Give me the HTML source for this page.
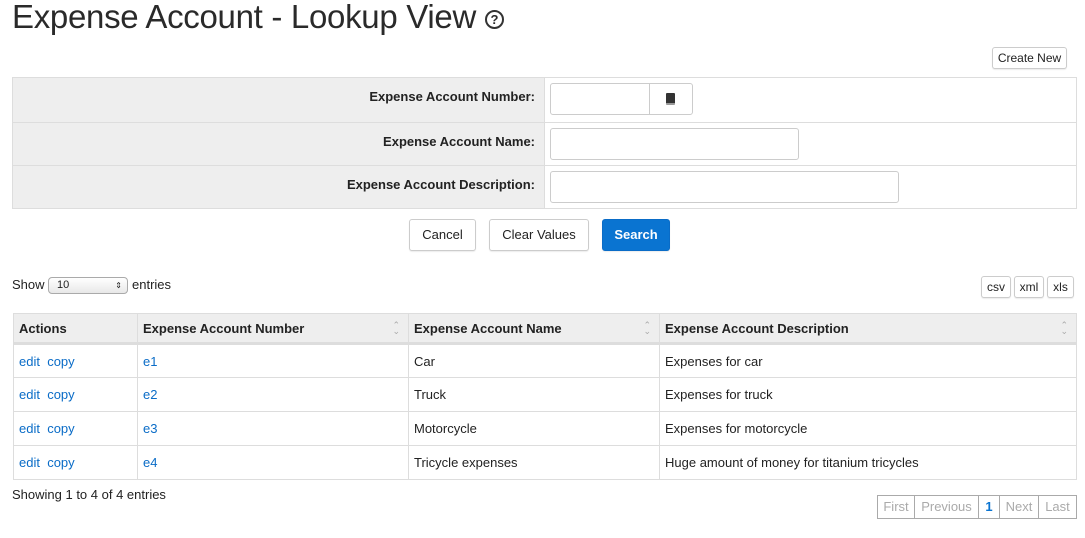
<!DOCTYPE html><html><head><style>
*{box-sizing:border-box}
body{margin:0;width:1085px;height:538px;background:#fff;font-family:"Liberation Sans",sans-serif;font-size:13px;color:#222;position:relative;overflow:hidden}
.a{position:absolute}
h1{position:absolute;left:12px;top:-2px;margin:0;font-weight:normal;font-size:33px;color:#2a2a2a;letter-spacing:-0.3px}
.btn{position:absolute;border:1px solid #ccc;border-radius:3px;background:#fff;text-align:center;font-size:13px;box-shadow:0 1px 1px rgba(0,0,0,.08)}
.inp{position:absolute;border:1px solid #ccc;border-radius:3px;background:#fff}
.lbl{position:absolute;right:550px;font-weight:bold;font-size:13px;width:400px;text-align:right}
table{position:absolute;left:13px;top:313px;border-collapse:collapse;width:1064px}
td,th{border:1px solid #ddd;padding:0 5px;height:34px;text-align:left;font-size:13px}
th{height:30px;background:#eee;border-bottom:3px solid #ddd;position:relative}
a{color:#0a6cc7;text-decoration:none}
.s{position:absolute;right:8px;top:8px;color:#aaa;font-size:9px;line-height:6px;font-weight:normal}
.pg{position:absolute;top:495px;height:24px;border:1px solid #aaa;color:#aaa;text-align:center;line-height:22px;font-size:13px}
</style></head><body>
<h1>Expense Account - Lookup View <span style="display:inline-block;width:19px;height:19px;border:2px solid #333;border-radius:50%;font-size:13px;text-align:center;line-height:15px;vertical-align:4px;font-weight:bold">?</span></h1>
<div class="btn" style="left:992px;top:47px;width:75px;height:22px;line-height:20px;font-size:12px">Create New</div>
<div class="a" style="left:12px;top:77px;width:1065px;height:132px;border:1px solid #ddd;background:#fff"></div>
<div class="a" style="left:13px;top:78px;width:531px;height:130px;background:#eee"></div>
<div class="a" style="left:13px;top:122px;width:1063px;height:1px;background:#ddd"></div>
<div class="a" style="left:13px;top:165px;width:1063px;height:1px;background:#ddd"></div>
<div class="a" style="left:544px;top:78px;width:1px;height:130px;background:#ddd"></div>
<div class="lbl" style="left:135px;top:89px">Expense Account Number:</div>
<div class="lbl" style="left:135px;top:134px">Expense Account Name:</div>
<div class="lbl" style="left:135px;top:177px">Expense Account Description:</div>
<div class="inp" style="left:550px;top:83px;width:143px;height:32px"></div>
<div class="a" style="left:649px;top:84px;width:1px;height:30px;background:#ccc"></div>
<div class="a" style="left:666px;top:93px;width:9px;height:12px;background:#333;border-radius:1px;border-bottom:2px solid #999"></div>
<div class="inp" style="left:550px;top:128px;width:249px;height:32px"></div>
<div class="inp" style="left:550px;top:171px;width:349px;height:32px"></div>
<div class="btn" style="left:409px;top:219px;width:67px;height:32px;line-height:30px">Cancel</div>
<div class="btn" style="left:489px;top:219px;width:100px;height:32px;line-height:30px">Clear Values</div>
<div class="btn" style="left:602px;top:219px;width:68px;height:32px;line-height:30px;background:#0a74d1;border-color:#0a6cc7;color:#fff;font-weight:bold">Search</div>
<div class="a" style="left:12px;top:277px">Show</div>
<div class="a" style="left:48px;top:277px;width:80px;height:17px;border:1px solid #aaa;border-radius:4px;background:linear-gradient(#fff,#e8e8e8);font-size:11px;padding-left:8px;line-height:15px">10<span style="position:absolute;right:5px;font-size:8px">&#8661;</span></div>
<div class="a" style="left:132px;top:277px">entries</div>
<div class="btn" style="left:981px;top:276px;width:30px;height:22px;line-height:20px;font-size:12px">csv</div>
<div class="btn" style="left:1014px;top:276px;width:30px;height:22px;line-height:20px;font-size:12px">xml</div>
<div class="btn" style="left:1047px;top:276px;width:27px;height:22px;line-height:20px;font-size:12px">xls</div>
<table>
<tr><th style="width:124px">Actions</th><th style="width:271px">Expense Account Number<span class="s">&#8963;<br>&#8964;</span></th><th style="width:251px">Expense Account Name<span class="s">&#8963;<br>&#8964;</span></th><th>Expense Account Description<span class="s">&#8963;<br>&#8964;</span></th></tr>
<tr><td><a>edit</a> &nbsp;<a>copy</a></td><td><a>e1</a></td><td>Car</td><td>Expenses for car</td></tr>
<tr><td><a>edit</a> &nbsp;<a>copy</a></td><td><a>e2</a></td><td>Truck</td><td>Expenses for truck</td></tr>
<tr><td><a>edit</a> &nbsp;<a>copy</a></td><td><a>e3</a></td><td>Motorcycle</td><td>Expenses for motorcycle</td></tr>
<tr><td><a>edit</a> &nbsp;<a>copy</a></td><td><a>e4</a></td><td>Tricycle expenses</td><td>Huge amount of money for titanium tricycles</td></tr>
</table>
<div class="a" style="left:12px;top:487px">Showing 1 to 4 of 4 entries</div>
<div class="pg" style="left:877px;width:38px">First</div>
<div class="pg" style="left:914px;width:65px">Previous</div>
<div class="pg" style="left:978px;width:22px;color:#0a74d1;font-weight:bold">1</div>
<div class="pg" style="left:999px;width:40px">Next</div>
<div class="pg" style="left:1038px;width:39px">Last</div>
</body></html>
